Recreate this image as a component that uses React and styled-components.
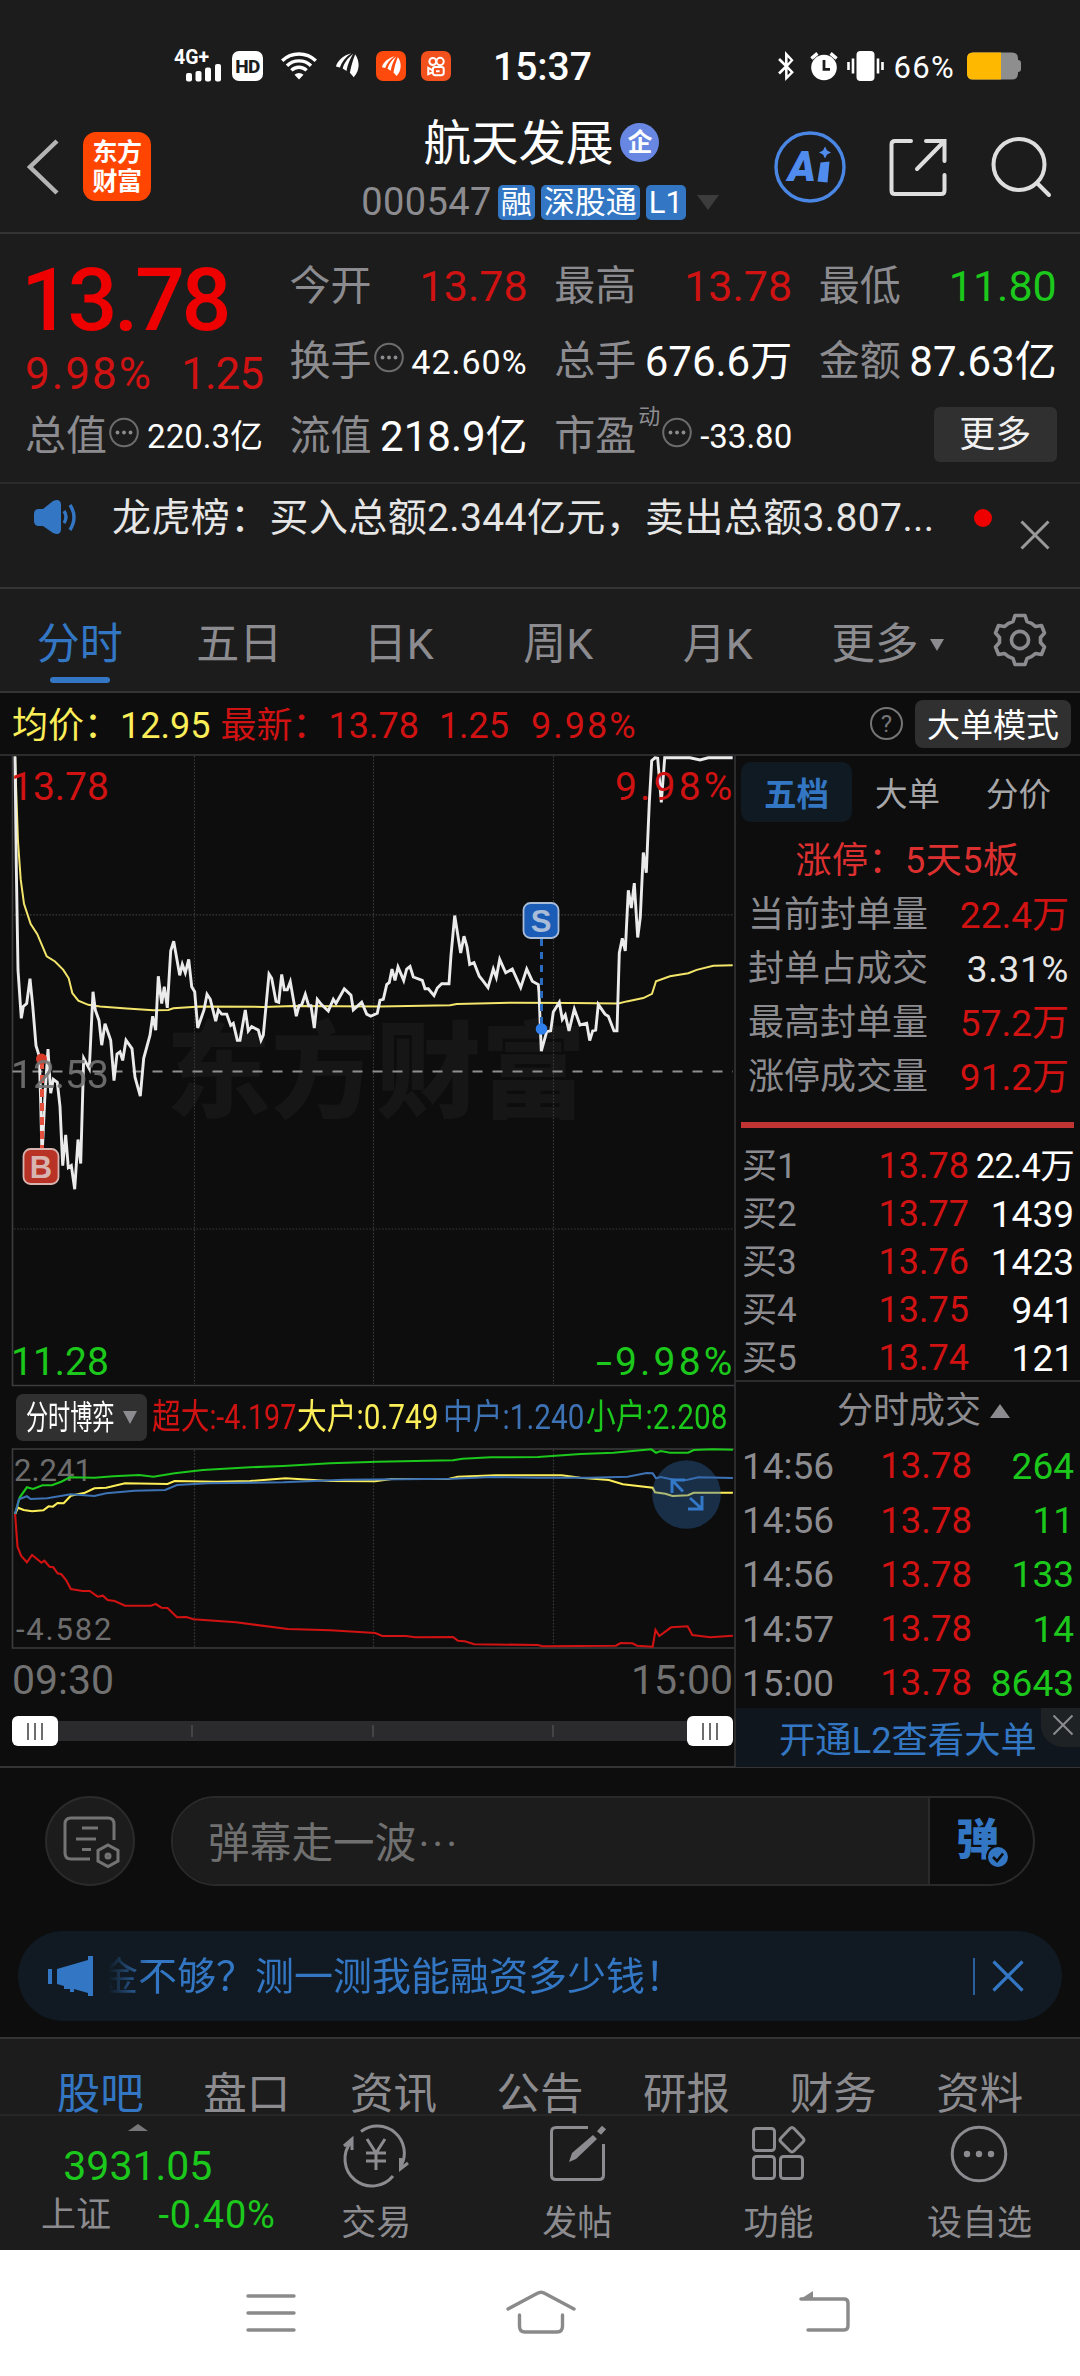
import styled, { createGlobalStyle, css } from "styled-components";
import { FaBluetoothB } from "react-icons/fa";

const RED = "#d01212";
const GREEN = "#1bc81b";
const BLUE = "#3377c4";
const GRAY = "#8c8c90";
const LINE = "#343436";
const YELLOW = "#fbee58";

const GlobalStyle = createGlobalStyle`
  * {
    box-sizing: border-box;
  }
  body {
    margin: 0;
    background: #0d0d0d;
    font-family: Roboto, "Noto Sans CJK SC", sans-serif;
    line-height: 1;
    white-space: nowrap;
  }
  svg {
    display: block;
    flex: none;
    overflow: visible;
  }
`;

const Screen = styled.div`
  width: 1080px;
  height: 2376px;
  overflow: hidden;
  display: flex;
  flex-direction: column;
`;

const Text = styled.span`
  display: block;
  flex: none;
  color: ${({ $color }) => $color || "#fff"};
  font-size: ${({ $size }) => $size}px;
  font-weight: ${({ $weight }) => $weight || 400};
  letter-spacing: ${({ $track }) => $track || 0}px;
  margin-left: ${({ $ml }) => $ml || 0}px;
  margin-top: ${({ $mt }) => $mt || 0}px;
  ${({ $squeeze, $width }) =>
    $squeeze &&
    css`
      width: ${$width}px;
      transform: scaleX(${$squeeze});
      transform-origin: left center;
    `}
`;

/* ---------- status bar ---------- */

const StatusBar = styled.div`
  height: 111px;
  background: #1c1c1c;
  padding: 21px 59px 0 174px;
  display: flex;
  align-items: center;
  justify-content: space-between;
  flex: none;
`;

const StatusGroup = styled.div`
  display: flex;
  align-items: center;
  gap: ${({ $gap }) => $gap || 0}px;
`;

const SignalIcon = () => (
  <svg width="48" height="36" viewBox="0 0 48 36" fill="#fff">
    <text x="0" y="15.5" fontSize="20" fontWeight="700" textLength="35" lengthAdjust="spacingAndGlyphs">
      4G+
    </text>
    <rect x="12" y="25" width="6" height="8.5" rx="2" />
    <rect x="21.5" y="23" width="6" height="10.5" rx="2" />
    <rect x="31" y="19.5" width="6" height="14" rx="2" />
    <rect x="41" y="16" width="6" height="17.5" rx="2" />
  </svg>
);

const HdBadge = styled.span`
  width: 31px;
  height: 30px;
  margin-left: 10px;
  border-radius: 7px;
  background: #fff;
  color: #1c1c1c;
  font-size: 19px;
  font-weight: 800;
  letter-spacing: -0.5px;
  display: flex;
  align-items: center;
  justify-content: center;
`;

const WifiIcon = styled(({ className }) => (
  <svg className={className} width="36" height="30" viewBox="0 0 36 30" fill="none" stroke="#fff" strokeWidth="3.4">
    <path d="M1.2 9.8 A24 24 0 0 1 34.8 9.8" />
    <path d="M6 14.8 A17 17 0 0 1 30 14.8" />
    <path d="M10.4 19.4 A10.6 10.6 0 0 1 25.6 19.4" />
    <path d="M13.5 23.8 A6.5 6.5 0 0 1 22.5 23.8 L18 28.5 Z" fill="#fff" stroke="none" />
  </svg>
))`
  margin-left: 18px;
`;

const Feather = ({ size }) => (
  <svg width={size} height={size * 1.1} viewBox="0 0 24 26" fill="#fff">
    <path d="M16 0 C8 2 1 8 0 14 L4 15 C6 9 10 4 16 0Z" />
    <path d="M18 0.5 C12 5 8 11 7 16 L11 18.5 C12 12 15 5 18 0.5Z" />
    <path d="M20 1 C17.5 8 15.5 14 14.5 20.5 L18.5 25 C25 18 25 8 20 1Z" />
  </svg>
);

const AppChip = styled.span`
  width: 30px;
  height: 30px;
  margin-left: ${({ $ml }) => $ml}px;
  border-radius: 7px;
  background: ${({ $bg }) => $bg || "transparent"};
  display: flex;
  align-items: center;
  justify-content: center;
`;

const CameraGlyph = () => (
  <svg width="20" height="21" viewBox="0 0 22 22" fill="none" stroke="#fff" strokeWidth="2.2">
    <circle cx="7.5" cy="5.5" r="3.8" />
    <circle cx="15.5" cy="5.5" r="4" />
    <rect x="7.5" y="11.5" width="12" height="9" rx="2.5" />
    <path d="M7 15 L2.5 12.5 V19.5 L7 17.5" />
    <path d="M11 16.2 H15" />
  </svg>
);

const AlarmIcon = () => (
  <svg width="30" height="30" viewBox="0 0 30 30">
    <circle cx="15" cy="16.5" r="12.8" fill="#fff" />
    <path d="M2.4 7.5 L8.4 2.4 M27.6 7.5 L21.6 2.4" stroke="#fff" strokeWidth="3.4" />
    <path d="M15 9 V18.4 H21" fill="none" stroke="#1c1c1c" strokeWidth="2.8" />
  </svg>
);

const VibrateIcon = () => (
  <svg width="37" height="30" viewBox="0 0 37 30">
    <rect x="9.5" y="0" width="18" height="30" rx="4" fill="#fff" />
    <path d="M1.5 11 V19 M6 7.5 V22.5 M31 7.5 V22.5 M35.5 11 V19" stroke="#fff" strokeWidth="2.6" />
  </svg>
);

const Battery = styled(({ className }) => (
  <svg className={className} width="54" height="28" viewBox="0 0 54 28">
    <path d="M6 .5 H45 Q51 .5 51 6.5 V8 Q54 8 54 11 V17 Q54 20 51 20 V21.5 Q51 27.5 45 27.5 H6 Q0 27.5 0 21.5 V6.5 Q0 .5 6 .5Z" fill="#8e8e8e" />
    <path d="M6 .5 H34 V27.5 H6 Q0 27.5 0 21.5 V6.5 Q0 .5 6 .5Z" fill="#ffb800" />
  </svg>
))`
  margin-left: 4px;
`;

/* ---------- header ---------- */

const Header = styled.header`
  height: 123px;
  background: #1c1c1c;
  border-bottom: 2px solid ${LINE};
  display: grid;
  grid-template-columns: 1fr auto 1fr;
  flex: none;
`;

const HeaderSide = styled.div`
  display: flex;
  align-items: center;
  height: 111px;
  padding: 0 29px 0 27px;
  gap: ${({ $gap }) => $gap}px;
  justify-content: ${({ $end }) => ($end ? "flex-end" : "flex-start")};
`;

const Logo = styled.div`
  width: 68px;
  height: 69px;
  border-radius: 13px;
  background: #ff4500;
  color: #fff;
  font-size: 25px;
  font-weight: 700;
  line-height: 29px;
  letter-spacing: -0.5px;
  padding-top: 6px;
  text-align: center;
`;

const TitleBlock = styled.div`
  display: flex;
  flex-direction: column;
  align-items: center;
`;

const TitleRow = styled.div`
  display: flex;
  align-items: center;
  height: 60px;
  gap: 7px;
  margin: 3px 0 0 3px;
`;

const CorpBadge = styled.span`
  width: 39px;
  height: 39px;
  margin-top: -3px;
  border-radius: 50%;
  background: #6787e2;
  color: #fff;
  font-size: 25px;
  font-weight: 700;
  display: flex;
  align-items: center;
  justify-content: center;
`;

const CodeRow = styled.div`
  display: flex;
  align-items: center;
  gap: 6px;
  height: 56px;
`;

const Tag = styled.span`
  height: 35px;
  padding: 0 3px;
  border-radius: 5px;
  background: ${BLUE};
  color: #fff;
  font-size: 31px;
  line-height: 36px;
`;

const Triangle = styled.span`
  width: 0;
  height: 0;
  flex: none;
  margin-left: ${({ $ml }) => $ml || 0}px;
  border-left: ${({ $w }) => $w / 2}px solid transparent;
  border-right: ${({ $w }) => $w / 2}px solid transparent;
  ${({ $up }) => ($up ? "border-bottom" : "border-top")}: ${({ $h }) => $h}px solid
    ${({ $color }) => $color};
`;

const HeaderIcons = () => (
  <>
    <svg width="72" height="74" viewBox="0 0 72 74">
      <circle cx="36" cy="37" r="34" fill="none" stroke="#4a86e4" strokeWidth="3.4" />
      <g fill="#4f8cee">
        <text x="14" y="51" fontSize="43" fontWeight="900" fontStyle="italic" textLength="28" lengthAdjust="spacingAndGlyphs">
          A
        </text>
        <path d="M46.500 32.500 L55.500 31.500 L53.500 52.500 L43.500 51.500Z" />
        <path d="M51 16.5 L53 20.5 L57 22.5 L53 24.5 L51 28.5 L49 24.5 L45 22.5 L49 20.5Z" />
      </g>
    </svg>
    <svg width="60" height="60" viewBox="0 0 60 60" fill="none" stroke="#dedede" strokeWidth="4" strokeLinecap="round">
      <path d="M23 4 H7 Q3.5 4 3.5 7.5 V53.5 Q3.5 57 7 57 H53 Q56.5 57 56.5 53.5 V38" />
      <path d="M29 32 L55 5.5 M38 4 H56.5 V24" />
    </svg>
    <svg width="61" height="61" viewBox="0 0 61 61" fill="none" stroke="#dedede" strokeWidth="4" strokeLinecap="round">
      <circle cx="29" cy="28.5" r="25.5" />
      <path d="M47 47 L59 59" />
    </svg>
  </>
);

/* ---------- quote ---------- */

const Quote = styled.section`
  height: 250px;
  background: #1c1c1c;
  border-bottom: 2px solid #2a2a2b;
  padding: 15px 23px 0 25px;
  display: grid;
  grid-template-columns: repeat(4, 238px);
  grid-template-rows: repeat(3, 75px);
  column-gap: 26.6px;
  flex: none;
`;

const BigPrice = styled.div`
  grid-row: span 2;
  height: 150px;
  padding-top: 7px;
  margin-left: -4px;
`;

const ChangeRow = styled.div`
  display: flex;
  justify-content: space-between;
  margin: 8px 0 0 4px;
`;

const Stat = styled.div`
  display: flex;
  align-items: center;
  height: 75px;

  & > :last-child {
    margin-left: auto;
  }
`;

const Sup = styled.span`
  align-self: flex-start;
  margin: 7px 0 0 2px;
  color: ${GRAY};
  font-size: 22px;
`;

const MoreButton = styled.button`
  width: 123px;
  height: 55px;
  border: 0;
  border-radius: 6px;
  background: #303031;
  color: #f0f0f0;
  font: inherit;
  font-size: 36px;
  padding: 0;
  margin-top: -4px;
  line-height: 57px;
`;

const DotsIcon = styled(({ className }) => (
  <svg className={className} width="31" height="31" viewBox="0 0 31 31">
    <circle cx="17" cy="15.5" r="13.8" fill="none" stroke="#6c6c6e" strokeWidth="2" />
    <circle cx="10.5" cy="15.5" r="1.9" fill={GRAY} />
    <circle cx="17" cy="15.5" r="1.9" fill={GRAY} />
    <circle cx="23.5" cy="15.5" r="1.9" fill={GRAY} />
  </svg>
))`
  margin-top: -8px;
`;

const stats = [
  { label: "今开", value: "13.78", color: RED, size: 43 },
  { label: "最高", value: "13.78", color: RED, size: 43 },
  { label: "最低", value: "11.80", color: GREEN, size: 43 },
  { label: "换手", value: "42.60%", dots: true, size: 34, track: 1 },
  { label: "总手", value: "676.6万", size: 42 },
  { label: "金额", value: "87.63亿", size: 42 },
  { label: "总值", value: "220.3亿", dots: true, size: 33 },
  { label: "流值", value: "218.9亿", size: 42 },
  { label: "市盈", sup: "动", value: "-33.80", dots: true, size: 33 },
];

/* ---------- notice ---------- */

const Notice = styled.section`
  height: 105px;
  background: #1c1c1c;
  border-bottom: 2px solid ${LINE};
  padding: 0 30px 0 34px;
  display: flex;
  justify-content: space-between;
  flex: none;
`;

const NoticeBody = styled.div`
  display: flex;
  align-items: center;
  height: 68px;
`;

const RedDot = styled.span`
  width: 18px;
  height: 18px;
  margin-left: 40px;
  border-radius: 50%;
  background: #ee0000;
`;

const NoticeClose = styled.div`
  padding-top: 36px;
`;

const SpeakerIcon = () => (
  <svg width="46" height="38" viewBox="0 0 46 38" fill={BLUE}>
    <path d="M0 15 Q0 10 5 10 H9 L19 2 Q26 -1 27 5 V31 Q26 37 19 34 L9 27 H5 Q0 27 0 22Z" />
    <path d="M30 12 Q34 18 30 24 M36 6 Q44 18 36 31" fill="none" stroke={BLUE} strokeWidth="3.4" />
  </svg>
);

const CloseIcon = ({ size, color, width = 3 }) => (
  <svg width={size} height={size} viewBox={`0 0 ${size} ${size}`}>
    <path d={`M1.5 1.5 L${size - 1.5} ${size - 1.5} M${size - 1.5} 1.5 L1.5 ${size - 1.5}`} stroke={color} strokeWidth={width} />
  </svg>
);

/* ---------- period tabs ---------- */

const Periods = styled.nav`
  height: 104px;
  background: #1c1c1c;
  border-bottom: 2px solid ${LINE};
  display: flex;
  flex: none;
`;

const Period = styled.div`
  width: ${({ $wide }) => ($wide ? 180 : 159.5)}px;
  height: 102px;
  padding-top: 34px;
  display: flex;
  flex-direction: column;
  align-items: center;
  justify-content: space-between;

  &::after {
    content: "";
    width: 60px;
    height: 6px;
    margin-bottom: 8px;
    border-radius: 3px;
    background: ${({ $active }) => ($active ? BLUE : "transparent")};
  }
`;

const InlineRow = styled.div`
  display: flex;
  align-items: center;
  gap: ${({ $gap }) => $gap || 0}px;
  padding-top: ${({ $pt }) => $pt || 0}px;
`;

const GearIcon = styled(({ className }) => (
  <svg className={className} width="54" height="54" viewBox="0 0 54 54" fill="none" stroke={GRAY} strokeWidth="3.6" strokeLinejoin="round">
    <path d="M22 2.5 H32 L34 8.5 Q39 10 42.5 13.5 L48.5 12.5 L51.5 20 L47.5 24.5 V29.5 L51.5 34 L48.5 41.5 L42.5 40.5 Q39 44 34 45.5 L32 51.5 H22 L20 45.5 Q15 44 11.5 40.5 L5.5 41.5 L2.5 34 L6.5 29.5 V24.5 L2.5 20 L5.5 12.5 L11.5 13.5 Q15 10 20 8.5Z" />
    <circle cx="27" cy="27" r="8.6" />
  </svg>
))`
  margin: 24px 0 0 15px;
`;

/* ---------- market area ---------- */

const InfoBar = styled.div`
  height: 63px;
  background: #0d0d0d;
  border-bottom: 2px solid #2c2c2e;
  padding: 0 9px 0 12px;
  display: flex;
  align-items: center;
  flex: none;
`;

const ModeButton = styled.span`
  width: 156px;
  height: 48px;
  margin-left: 12px;
  border-radius: 8px;
  background: #303031;
  color: #fff;
  font-size: 33px;
  line-height: 51px;
  text-align: center;
`;

const HelpIcon = styled.span`
  width: 33px;
  height: 33px;
  margin-left: auto;
  border: 2.5px solid #757577;
  border-radius: 50%;
  color: #757577;
  font-size: 24px;
  line-height: 30px;
  text-align: center;
`;

const Market = styled.main`
  height: 1012px;
  display: flex;
  border-bottom: 2px solid ${LINE};
  flex: none;
`;

const ChartColumn = styled.div`
  width: 734px;
`;

const OrderColumn = styled.aside`
  flex: 1;
  border-left: 2px solid #2c2c2e;
`;

// Plot units: 3 per px across, 2.376 per px down, origin 15px above the frame.
const PRICE_PLOT = [3, 2.376, 15.5];
// Flow units: 2.119 per px across, 3 per px down, origin 68px above the frame.
const FLOW_PLOT = [2.119, 3, 68];

const plot = (points, [sx, sy, dy]) =>
  points
    .trim()
    .split(/\s+/)
    .map((p) => {
      const [x, y] = p.split(",");
      return `${(x / sx).toFixed(1)},${(y / sy - dy).toFixed(1)}`;
    })
    .join(" ");

const price = `45,38 49,300 54,545 64,660 70,632 80,625 90,566 98,630 108,725 118,750 122,860 126,990 135,840
144,733 152,838 160,805 172,812 180,870 188,1010 197,937 205,1015 214,1010 224,1066 234,948 242,1005 251,755
268,780 279,597 286,640 297,665 305,724 315,673 332,712 342,808 351,745 360,740 368,760 378,712 396,732
405,800 421,845 431,755 450,700 458,655 467,688 475,560 485,625 493,585 502,635 512,500 521,477 539,558
547,532 556,552 566,520 575,585 584,597 593,683 612,640 621,603 631,615 647,667 655,640 665,650 680,650
692,677 700,672 712,712 720,712 736,640 745,690 755,680 775,688 783,712 790,700 807,555 815,565 828,620
836,622 845,556 853,592 862,592 871,573 889,655 897,630 905,628 916,603 926,630 933,630 943,683 952,615
965,628 985,643 1000,615 1008,625 1033,590 1053,605 1060,640 1085,622 1100,650 1112,655 1132,648 1140,617
1150,615 1160,580 1168,575 1176,543 1185,570 1194,538 1211,570 1220,543 1230,537 1240,562 1267,570 1275,590
1285,590 1302,606 1312,588 1325,578 1347,578 1353,510 1364,416 1374,465 1382,505 1392,465 1401,490 1409,532
1422,528 1438,560 1448,570 1464,587 1480,543 1489,563 1499,520 1517,552 1537,543 1562,587 1580,543 1597,572
1615,580 1617,600 1624,738 1640,692 1652,690 1660,645 1678,622 1687,663 1696,652 1707,690 1723,638 1740,676
1760,672 1769,713 1778,690 1787,688 1795,627 1815,650 1825,655 1842,690 1851,690 1858,505 1867,470 1876,500
1885,356 1894,398 1903,339 1913,468 1921,420 1930,266 1939,314 1948,148 1955,48 1965,41 1973,42 1984,147
1994,41 2070,41 2100,46 2125,41 2198,41`;

const average = `45,38 54,240 62,330 72,388 92,436 112,460 140,513 165,525 190,545 206,565 217,600 235,618
265,628 300,632 380,637 460,641 505,640 520,636 600,632 790,633 880,631 1140,632 1350,629 1370,626 1540,623
1720,624 1855,625 1880,620 1930,612 1956,602 1968,572 2010,560 2065,553 2090,545 2140,535 2198,534`;

const flows = [
  {
    color: GREEN,
    points: `32,402 42,352 57,322 70,327 90,316 110,316 130,305 148,292 200,293 240,289 295,285 325,290
370,280 430,270 530,262 600,258 700,250 800,245 960,241 980,236 1040,232 1140,231 1230,222 1300,218 1380,208
1390,218 1400,213 1420,218 1458,218 1470,210 1510,208 1553,209`,
  },
  {
    color: YELLOW,
    points: `32,402 38,383 50,390 68,394 92,391 103,379 112,380 122,369 135,370 150,347 180,338 200,325
225,323 265,310 355,312 370,303 460,305 530,303 605,295 700,303 795,304 830,297 950,297 970,290 1050,286
1190,286 1230,293 1290,300 1320,313 1383,323 1388,337 1410,341 1425,348 1458,346 1470,338 1553,338`,
  },
  {
    color: "#3d72b4",
    points: `32,402 40,358 57,349 65,357 100,355 150,343 200,348 225,340 285,332 350,330 375,315 440,310
600,307 730,299 960,296 1040,291 1140,293 1250,293 1330,290 1370,279 1383,280 1390,295 1400,291 1430,300
1455,300 1480,292 1553,294`,
  },
  {
    color: RED,
    points: `32,402 37,500 45,528 57,547 68,525 88,548 94,542 105,560 113,562 122,580 130,583 140,600
150,627 175,633 190,633 207,650 218,647 228,660 243,663 265,677 320,677 330,672 342,683 355,684 375,712
395,711 410,718 500,727 610,747 700,751 795,759 810,768 860,768 880,772 960,771 970,782 985,784 1005,793
1140,795 1150,799 1305,797 1315,789 1340,790 1350,797 1383,800 1389,750 1397,768 1422,742 1457,739 1467,765
1505,772 1553,767`,
  },
];

const columns = [194.5, 373.5, 553.5];

const Marker = ({ x, y, letter, fill, edge }) => (
  <g>
    <rect x={x} y={y} width="35" height="35" rx="7" fill={fill} stroke={edge} strokeWidth="1.8" />
    <text x={x + 17.5} y={y + 28.5} fontSize="31" fontWeight="700" fill={edge} textAnchor="middle" fontFamily="Liberation Sans, sans-serif">
      {letter}
    </text>
  </g>
);

const PriceChart = () => (
  <svg width="734" height="630" viewBox="0 0 734 630">
    <text x="166" y="353" fontSize="105" fontWeight="900" fill="#161616" fontFamily="Noto Sans CJK SC, sans-serif">
      东方财富
    </text>
    <path d="M12.5 0 V629.5 H734" fill="none" stroke="#3c3c3e" strokeWidth="1.6" />
    <g stroke="#3a3a3a" strokeWidth="1.2" strokeDasharray="1.6 1.6">
      {columns.map((x) => (
        <path key={x} d={`M${x} 0 V628`} />
      ))}
      <path d="M14 158.8 H733 M14 473 H733" />
    </g>
    <path d="M12.5 315.5 H733" stroke="#8f8f8f" strokeWidth="2" strokeDasharray="10 10" />
    <polyline points={plot(average, PRICE_PLOT)} fill="none" stroke="#f3e56b" strokeWidth="2" />
    <polyline points={plot(price, PRICE_PLOT)} fill="none" stroke="#ebebeb" strokeWidth="2.9" />
    <path d="M42 305 V400" stroke="#e5503f" strokeWidth="4" strokeDasharray="8 6" />
    <circle cx="41.5" cy="303" r="5.5" fill="#d83a28" />
    <Marker x={23.5} y={393} letter="B" fill="#b83226" edge="#d8b4b0" />
    <path d="M541.5 183 V270" stroke="#2a6cc0" strokeWidth="3" strokeDasharray="7 6" />
    <circle cx="541.5" cy="273" r="5.8" fill="#2f80ec" />
    <Marker x={523.5} y={147} letter="S" fill="#1a5cb6" edge="#a9bcd8" />
    <g fontSize="39">
      <text x="11" y="44" fill={RED}>
        13.78
      </text>
      <text x="615" y="44" fill={RED} letterSpacing="3.2">
        9.98%
      </text>
      <text x="11" y="332" fill="#747474" opacity=".9">
        12.53
      </text>
      <text x="11" y="619" fill={GREEN}>
        11.28
      </text>
      <text x="615" y="619" fill={GREEN} letterSpacing="3.2">
        9.98%
      </text>
      <text x="596" y="619" fill={GREEN} textLength="16" lengthAdjust="spacingAndGlyphs">
        -
      </text>
    </g>
  </svg>
);

const FlowBar = styled.div`
  height: 62px;
  padding: 1px 0 0 16px;
  display: flex;
  align-items: center;
`;

const FlowSelect = styled.div`
  width: 131px;
  height: 47px;
  margin-right: 5px;
  padding-left: 10px;
  border-radius: 7px;
  background: #303031;
  display: flex;
  align-items: center;
`;

const FlowChart = () => (
  <svg width="734" height="202" viewBox="0 0 734 202">
    <path d="M734 1 H12.5 V200 H734" fill="none" stroke="#3c3c3e" strokeWidth="1.6" />
    <g stroke="#3a3a3a" strokeWidth="1.2" strokeDasharray="1.6 1.6">
      {columns.map((x) => (
        <path key={x} d={`M${x} 2 V199`} />
      ))}
    </g>
    <g fill="#6d6d6d" fontSize="31">
      <text x="14" y="33">
        2.241
      </text>
      <text x="16" y="192" letterSpacing="1.8">
        -4.582
      </text>
    </g>
    {flows.map(({ color, points }) => (
      <polyline key={color} points={plot(points, FLOW_PLOT)} fill="none" stroke={color} strokeWidth="2.1" />
    ))}
    <circle cx="686.5" cy="46.5" r="34.3" fill="#2c63a6" opacity=".38" />
    <g fill="none" stroke="#3478c8" strokeWidth="3">
      <path d="M672 45 V32 H685 M672 32 L683 43.5" />
      <path d="M702 48 V61 H688 M702 61 L690 50" />
    </g>
  </svg>
);

const TimeAxis = styled.div`
  height: 66px;
  padding: 10px 1px 0 12px;
  display: flex;
  justify-content: space-between;
`;

const RangeTrack = styled.div`
  height: 20px;
  margin: 5px 1px 0 12px;
  background: #2b2b2d;
  display: flex;
  align-items: center;
  justify-content: space-between;
`;

const RangeTick = styled.span`
  width: 2px;
  height: 12px;
  background: #444446;
`;

// The handles take no room of their own, so the ticks stay on the chart's grid.
const RangeHandle = styled.span`
  width: 46px;
  height: 30px;
  margin-${({ $side }) => $side}: -46px;
  border-radius: 6px;
  background: #fff;
  display: flex;
  align-items: center;
  justify-content: center;
  gap: 5px;
  flex: none;

  i {
    width: 2px;
    height: 17px;
    background: #6d6d6d;
  }
`;

const BookTabs = styled.div`
  height: 68px;
  padding: 6px 6px 0 5px;
  display: grid;
  grid-template-columns: repeat(3, 111px);
`;

const BookTab = styled.div`
  height: 60px;
  border-radius: 10px;
  background: ${({ $active }) => ($active ? "#101a23" : "transparent")};
  color: ${({ $active }) => ($active ? BLUE : "#a6a6a8")};
  font-size: 32.5px;
  font-weight: ${({ $active }) => ($active ? 700 : 400)};
  line-height: 66px;
  text-align: center;
`;

const LimitTitle = styled.div`
  height: 64px;
  padding-right: 1px;
  color: #dc3030;
  font-size: 36px;
  letter-spacing: 0.5px;
  line-height: 75px;
  text-align: center;
`;

const LimitRow = styled.div`
  height: 54px;
  padding: 0 11px 0 12px;
  display: flex;
  align-items: center;
  justify-content: space-between;
`;

const LimitRule = styled.div`
  height: 6px;
  margin: 18px 6px 14px 5px;
  background: #c13434;
`;

const BookRow = styled.div`
  height: ${({ $h }) => $h}px;
  padding: 0 6px 0 6px;
  display: grid;
  grid-template-columns: ${({ $mid }) => $mid}px 112px 1fr;
  align-items: center;

  & > :not(:first-child) {
    justify-self: end;
  }
`;

const TradesHead = styled.div`
  height: 59px;
  margin-top: -2px;
  padding-left: 31px;
  border-top: 2px solid #2c2c2e;
  display: flex;
  align-items: center;
  justify-content: center;
  gap: 9px;
`;

const UpgradeBar = styled.div`
  position: relative;
  height: 59px;
  margin-top: -2px;
  background: #10161d;
  color: ${BLUE};
  font-size: 36.3px;
  line-height: 66px;
  padding-left: 43px;
`;

const UpgradeClose = styled.div`
  position: absolute;
  top: 0;
  right: 0;
  width: 39px;
  height: 39px;
  border-bottom-left-radius: 22px;
  background: #1e2225;
  display: flex;
  align-items: center;
  justify-content: center;
  padding: 0 0 6px 5px;
`;

const limits = [
  ["当前封单量", "22.4万", RED],
  ["封单占成交", "3.31%", "#e6e6e6"],
  ["最高封单量", "57.2万", RED],
  ["涨停成交量", "91.2万", RED],
];

const bids = [
  ["买1", "13.78", "22.4万"],
  ["买2", "13.77", "1439"],
  ["买3", "13.76", "1423"],
  ["买4", "13.75", "941"],
  ["买5", "13.74", "121"],
];

const trades = [
  ["14:56", "13.78", "264"],
  ["14:56", "13.78", "11"],
  ["14:56", "13.78", "133"],
  ["14:57", "13.78", "14"],
  ["15:00", "13.78", "8643"],
];

/* ---------- bullet comments ---------- */

const CommentRow = styled.section`
  height: 163px;
  padding: 28px 45px 0;
  display: flex;
  gap: 36px;
  flex: none;
`;

const RoundButton = styled.div`
  width: 90px;
  height: 90px;
  border: 2px solid #2a2a2b;
  border-radius: 50%;
  background: #1c1c1c;
  display: flex;
  align-items: center;
  justify-content: center;
`;

const CommentInput = styled.div`
  width: 864px;
  height: 90px;
  border: 2px solid #2a2a2b;
  border-radius: 45px;
  overflow: hidden;
  display: flex;
`;

const CommentField = styled.div`
  width: 757px;
  padding: 5px 0 0 35px;
  background: #1c1c1c;
  border-right: 2px solid #2a2a2b;
  display: flex;
  align-items: center;
`;

const BulletToggle = styled.div`
  position: relative;
  flex: 1;
  padding: 21px 0 0 26px;
`;

const CheckBadge = styled.svg`
  position: absolute;
  left: 56px;
  top: 47px;
`;

const Banner = styled.div`
  height: 90px;
  margin: 0 18px 16px;
  border-radius: 45px;
  background: #111a22;
  padding: 0 38px 0 30px;
  display: flex;
  align-items: center;
  flex: none;
`;

const BannerText = styled.div`
  width: 854px;
  margin-left: 5px;
  padding-top: 2px;
  color: ${BLUE};
  font-size: 39px;
  line-height: 60px;
  mask-image: linear-gradient(90deg, transparent 9px, #000 50px);
`;

const BannerRule = styled.span`
  width: 2px;
  height: 37px;
  margin: 0 17px 0 auto;
  background: #2b5f9c;
`;

/* ---------- bottom ---------- */

const Sections = styled.nav`
  height: 77px;
  background: #1c1c1c;
  border-top: 2px solid ${LINE};
  padding: 0 27px;
  display: grid;
  grid-template-columns: repeat(7, 1fr);
  justify-items: center;
  align-items: end;
  flex: none;

  & > * {
    margin-bottom: -2px;
  }
`;

const ActionBar = styled.div`
  height: 136px;
  background: #1c1c1c;
  border-top: 2px solid #262627;
  display: flex;
  flex: none;
`;

const IndexBlock = styled.div`
  width: 276px;
  padding-top: 8px;
  display: flex;
  flex-direction: column;
  align-items: center;
`;

const IndexRow = styled.div`
  width: 100%;
  padding: 0 0 0 41px;
  margin-top: 9px;
  display: flex;
  align-items: center;
  justify-content: space-between;
`;

const Action = styled.div`
  width: 201.3px;
  padding: 6px 0 9px;
  display: flex;
  flex-direction: column;
  align-items: center;
  justify-content: space-between;
`;

const icon = { width: 64, height: 64, viewBox: "0 0 64 64", fill: "none", stroke: "#8c8c90", strokeWidth: 3 };

const actions = [
  {
    label: "交易",
    icon: (
      <svg {...icon}>
        <path d="M17 9.5 A27 27 0 0 1 57 44 M56.5 36 V47 L64 41" />
        <path d="M49 54 A27 27 0 0 1 7 20 M0 24 L8 17 V28" />
        <path d="M23 17 L32 31 L41 17 M22 31 H42 M22 39 H42 M32 31 V48" />
      </svg>
    ),
  },
  {
    label: "发帖",
    icon: (
      <svg {...icon}>
        <path d="M43 5.5 H11 Q6.5 5.5 6.5 10 V53 Q6.5 57.5 11 57.5 H54 Q58.5 57.5 58.5 53 V22" />
        <path d="M24 40 L27 31 L48 13 L52 17 L31 37Z" fill="#8c8c90" stroke="none" />
        <path d="M54 11 L59 5.5" strokeWidth="5.5" />
      </svg>
    ),
  },
  {
    label: "功能",
    icon: (
      <svg {...icon}>
        <rect x="7.5" y="6.5" width="21" height="22" rx="3" />
        <rect x="7.5" y="34.5" width="21" height="22" rx="3" />
        <rect x="34.5" y="34.5" width="22" height="22" rx="3" />
        <path d="M44 6.5 Q46 4.5 48 6.5 L57 16 Q59 18 57 20 L48 29 Q46 31 44 29 L35 20 Q33 18 35 16Z" />
      </svg>
    ),
  },
  {
    label: "设自选",
    icon: (
      <svg {...icon}>
        <circle cx="32" cy="32" r="26.8" />
        <g fill="#8c8c90" stroke="none">
          <circle cx="20" cy="32" r="3.2" />
          <circle cx="32" cy="32" r="3.2" />
          <circle cx="44" cy="32" r="3.2" />
        </g>
      </svg>
    ),
  },
];

const SystemNav = styled.div`
  height: 126px;
  background: #fff;
  padding: 39px 228px 0 246px;
  display: flex;
  justify-content: space-between;
  align-items: flex-start;
  flex: none;
`;

const HomeIcon = styled.svg`
  margin-right: 12px;
`;

const navIcon = { height: 48, fill: "none", stroke: "#8a8a8a", strokeWidth: 3.4, strokeLinecap: "round" };

const App = () => {
  return (
    <Screen>
      <GlobalStyle />
      <StatusBar>
        <StatusGroup>
          <SignalIcon />
          <HdBadge>HD</HdBadge>
          <WifiIcon />
          <AppChip $ml={15}>
            <Feather size={23} />
          </AppChip>
          <AppChip $bg="#ff4a0d" $ml={14}>
            <Feather size={19} />
          </AppChip>
          <AppChip $bg="#f2501c" $ml={15}>
            <CameraGlyph />
          </AppChip>
          <Text $size={39} $weight={500} $ml={42} $mt={2}>
            15:37
          </Text>
        </StatusGroup>
        <StatusGroup $gap={8}>
          <FaBluetoothB size={30} color="#fff" />
          <AlarmIcon />
          <VibrateIcon />
          <Text $size={31} $track={1.3} $mt={2} $ml={2}>
            66%
          </Text>
          <Battery />
        </StatusGroup>
      </StatusBar>

      <Header>
        <HeaderSide $gap={24}>
          <svg width="32" height="56" viewBox="0 0 32 56" fill="none" stroke="#b4b4b4" strokeWidth="4.5">
            <path d="M30 2 L3 28 L30 54" />
          </svg>
          <Logo>
            东方
            <br />
            财富
          </Logo>
        </HeaderSide>
        <TitleBlock>
          <TitleRow>
            <Text $size={47.5} $mt={2}>
              航天发展
            </Text>
            <CorpBadge>企</CorpBadge>
          </TitleRow>
          <CodeRow>
            <Text $size={38} $color={GRAY} $track={0.4}>
              000547
            </Text>
            <Tag>融</Tag>
            <Tag>深股通</Tag>
            <Tag>L1</Tag>
            <Triangle $w={22} $h={15} $ml={5} $color="#3c3c3d" />
          </CodeRow>
        </TitleBlock>
        <HeaderSide $end $gap={42}>
          <HeaderIcons />
        </HeaderSide>
      </Header>

      <Quote>
        <BigPrice>
          <Text $size={88} $weight={500} $color="#ee0000" $track={-3.5}>
            13.78
          </Text>
          <ChangeRow>
            <Text $size={44} $color={RED} $track={2}>
              9.98%
            </Text>
            <Text $size={44} $color={RED} $track={-1}>
              1.25
            </Text>
          </ChangeRow>
        </BigPrice>
        {stats.map((s) => (
          <Stat key={s.label}>
            <Text $size={41} $color={GRAY}>
              {s.label}
            </Text>
            {s.sup && <Sup>{s.sup}</Sup>}
            {s.dots && <DotsIcon />}
            <Text $size={s.size} $color={s.color} $track={s.track}>
              {s.value}
            </Text>
          </Stat>
        ))}
        <Stat>
          <MoreButton>更多</MoreButton>
        </Stat>
      </Quote>

      <Notice>
        <NoticeBody>
          <SpeakerIcon />
          <Text $size={39} $color="#e6e6e6" $track={0.38} $ml={32}>
            龙虎榜：买入总额2.344亿元，卖出总额3.807...
          </Text>
          <RedDot />
        </NoticeBody>
        <NoticeClose>
          <CloseIcon size={30} color="#9a9a9a" />
        </NoticeClose>
      </Notice>

      <Periods>
        {["分时", "五日", "日K", "周K", "月K"].map((p, i) => (
          <Period key={p} $active={i === 0}>
            <Text $size={43} $color={i === 0 ? BLUE : GRAY}>
              {p}
            </Text>
          </Period>
        ))}
        <Period $wide>
          <InlineRow $gap={11}>
            <Text $size={43.5} $color={GRAY}>
              更多
            </Text>
            <Triangle $w={15} $h={12} $color={GRAY} />
          </InlineRow>
        </Period>
        <GearIcon />
      </Periods>

      <InfoBar>
        <InlineRow $pt={4}>
          <Text $size={36} $color={YELLOW}>
            均价：12.95
          </Text>
          <Text $size={36} $color={RED} $ml={10}>
            最新：13.78
          </Text>
          <Text $size={36} $color={RED} $ml={20}>
            1.25
          </Text>
          <Text $size={36} $color={RED} $ml={22} $track={2}>
            9.98%
          </Text>
        </InlineRow>
        <HelpIcon>?</HelpIcon>
        <ModeButton>大单模式</ModeButton>
      </InfoBar>

      <Market>
        <ChartColumn>
          <PriceChart />
          <FlowBar>
            <FlowSelect>
              <Text $size={33} $squeeze={0.67} $width={97}>
                分时博弈
              </Text>
              <Triangle $w={15} $h={13} $color={GRAY} />
            </FlowSelect>
            <Text $size={35} $color={RED} $squeeze={0.82} $width={145}>
              超大:-4.197
            </Text>
            <Text $size={35} $color={YELLOW} $squeeze={0.85} $width={146}>
              大户:0.749
            </Text>
            <Text $size={35} $color="#3d72b4" $squeeze={0.85} $width={143}>
              中户:1.240
            </Text>
            <Text $size={35} $color={GREEN} $squeeze={0.85} $width={142}>
              小户:2.208
            </Text>
          </FlowBar>
          <FlowChart />
          <TimeAxis>
            <Text $size={41} $color="#717171">
              09:30
            </Text>
            <Text $size={41} $color="#717171">
              15:00
            </Text>
          </TimeAxis>
          <RangeTrack>
            <RangeHandle $side="right">
              <i />
              <i />
              <i />
            </RangeHandle>
            <RangeTick />
            <RangeTick />
            <RangeTick />
            <RangeHandle $side="left">
              <i />
              <i />
              <i />
            </RangeHandle>
          </RangeTrack>
        </ChartColumn>

        <OrderColumn>
          <BookTabs>
            <BookTab $active>五档</BookTab>
            <BookTab>大单</BookTab>
            <BookTab>分价</BookTab>
          </BookTabs>
          <LimitTitle>涨停：5天5板</LimitTitle>
          {limits.map(([label, value, color]) => (
            <LimitRow key={label}>
              <Text $size={36} $color={GRAY}>
                {label}
              </Text>
              <Text $size={37} $color={color} $track={value.endsWith("%") ? 0.6 : 0}>
                {value}
              </Text>
            </LimitRow>
          ))}
          <LimitRule />
          {bids.map(([label, p, volume]) => (
            <BookRow key={label} $h={48.1} $mid={115}>
              <Text $size={35} $color={GRAY}>
                {label}
              </Text>
              <Text $size={36} $color={RED}>
                {p}
              </Text>
              {volume.endsWith("万") ? (
                <Text $size={34.5} $track={-0.7}>
                  {volume}
                </Text>
              ) : (
                <Text $size={37}>{volume}</Text>
              )}
            </BookRow>
          ))}
          <TradesHead>
            <Text $size={36} $color={GRAY}>
              分时成交
            </Text>
            <Triangle $up $w={20} $h={14} $color={GRAY} />
          </TradesHead>
          {trades.map(([time, p, volume], i) => (
            <BookRow key={i} $h={54.2} $mid={118}>
              <Text $size={37} $color={GRAY}>
                {time}
              </Text>
              <Text $size={36.5} $color={RED}>
                {p}
              </Text>
              <Text $size={37} $color={GREEN}>
                {volume}
              </Text>
            </BookRow>
          ))}
          <UpgradeBar>
            开通L2查看大单
            <UpgradeClose>
              <CloseIcon size={22} color="#8c8c90" width={2} />
            </UpgradeClose>
          </UpgradeBar>
        </OrderColumn>
      </Market>

      <CommentRow>
        <RoundButton>
          <svg width="56" height="52" viewBox="0 0 56 52" fill="none" stroke="#747474" strokeWidth="3">
            <path d="M28 44 H9 Q3 44 3 38 V9 Q3 3 9 3 H46 Q52 3 52 9 V25" />
            <path d="M20 13 H36 M14 24 H34 M20 34.5 H29" />
            <path d="M46 30 L56 35.5 V46 L46 51.5 L36 46 V35.5Z" />
            <circle cx="46" cy="41" r="2" />
          </svg>
        </RoundButton>
        <CommentInput>
          <CommentField>
            <Text $size={41.5} $color="#707070" $track={0.2}>
              弹幕走一波
            </Text>
            <Text $size={41.5} $color="#707070" $track={3} $ml={2}>
              ···
            </Text>
          </CommentField>
          <BulletToggle>
            <Text $size={43} $weight={900} $color={BLUE}>
              弹
            </Text>
            <CheckBadge width="24" height="24" viewBox="0 0 24 24">
              <circle cx="12" cy="12" r="11" fill={BLUE} stroke="#0d0d0d" strokeWidth="2" />
              <path d="M7 12 L11 16 L17 8.5" fill="none" stroke="#0d0d0d" strokeWidth="2.6" />
            </CheckBadge>
          </BulletToggle>
        </CommentInput>
      </CommentRow>

      <Banner>
        <svg width="46" height="40" viewBox="0 0 46 40" fill={BLUE}>
          <path d="M0 13 H4 V28 H0Z M9 13 L40 4 V0 H45 V40 H40 V37 L26 33 V36 H22 V33 H16 V30 L9 28Z" />
        </svg>
        <BannerText>金不够？测一测我能融资多少钱！</BannerText>
        <BannerRule />
        <CloseIcon size={32} color={BLUE} width={3.2} />
      </Banner>

      <Sections>
        {["股吧", "盘口", "资讯", "公告", "研报", "财务", "资料"].map((s, i) => (
          <Text key={s} $size={43.5} $color={i === 0 ? BLUE : GRAY}>
            {s}
          </Text>
        ))}
      </Sections>

      <ActionBar>
        <IndexBlock>
          <Triangle $up $w={21} $h={7} $color="#77777a" />
          <Text $size={41} $color={GREEN} $mt={15}>
            3931.05
          </Text>
          <IndexRow>
            <Text $size={35} $color={GRAY}>
              上证
            </Text>
            <Text $size={38} $color={GREEN} $track={0.8}>
              -0.40%
            </Text>
          </IndexRow>
        </IndexBlock>
        {actions.map((a) => (
          <Action key={a.label}>
            {a.icon}
            <Text $size={35} $color={GRAY}>
              {a.label}
            </Text>
          </Action>
        ))}
      </ActionBar>

      <SystemNav>
        <svg width="50" viewBox="0 0 50 48" {...navIcon}>
          <path d="M2 7 H48 M2 24 H48 M2 41 H48" />
        </svg>
        <HomeIcon width="70" viewBox="0 0 70 48" {...navIcon}>
          <path d="M2 20 L31 4.5 Q35 2 39 4.5 L68 20" />
          <path d="M13.5 26 V37 Q13.5 43 19 43 H51 Q56.5 43 56.5 37 V26" />
        </HomeIcon>
        <svg width="54" viewBox="0 0 54 48" {...navIcon}>
          <path d="M3 10 H46 Q50 10 50 14 V37 Q50 41 46 41 H10" />
          <path d="M1 11 L15 2 V11Z" fill="#8a8a8a" stroke="none" />
        </svg>
      </SystemNav>
    </Screen>
  );
};

export default App;
